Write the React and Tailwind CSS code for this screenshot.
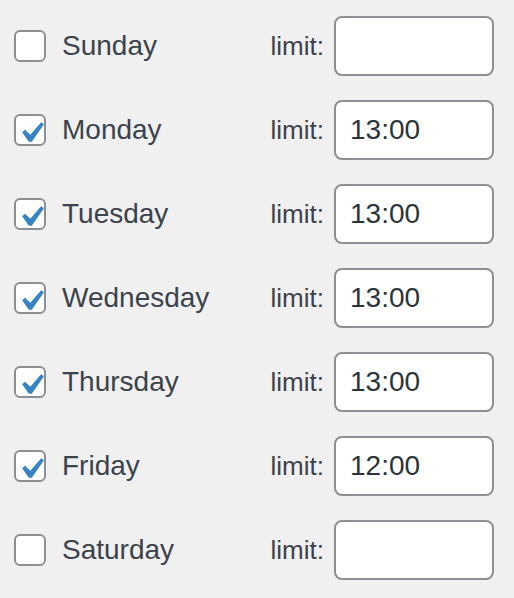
const days = [
  { name: 'Sunday', checked: false, limit: '' },
  { name: 'Monday', checked: true, limit: '13:00' },
  { name: 'Tuesday', checked: true, limit: '13:00' },
  { name: 'Wednesday', checked: true, limit: '13:00' },
  { name: 'Thursday', checked: true, limit: '13:00' },
  { name: 'Friday', checked: true, limit: '12:00' },
  { name: 'Saturday', checked: false, limit: '' },
]

function Checkbox({ checked }) {
  return (
    <span className="relative block w-8 h-8 shrink-0 rounded-[6px] border-2 border-[#8c8f94] bg-white">
      {checked && (
        <svg className="absolute left-[-6px] top-[-4px] w-[42px] h-[42px]" viewBox="0 0 20 20">
          <path d="M14.83 4.89l1.34.94-5.81 8.38H9.02L5.78 9.67l1.34-1.25 2.57 2.4z" fill="#3582c4" />
        </svg>
      )}
    </span>
  )
}

export default function App() {
  return (
    <div className="w-[514px] min-h-screen bg-[#f0f0f1] pt-4 pl-[14px] pr-5 flex flex-col gap-6 font-['Liberation_Sans',Arial,sans-serif]">
      {days.map(day => (
        <div key={day.name} className="flex items-center h-[60px]">
          <Checkbox checked={day.checked} />
          <span className="ml-4 text-[28px] leading-none text-[#3c434a]">{day.name}</span>
          <span className="ml-auto mr-[10px] text-[26px] leading-none text-[#3c434a]">limit:</span>
          <input
            type="text"
            defaultValue={day.limit}
            className="w-40 h-[60px] rounded-[8px] border-2 border-[#8c8f94] bg-white px-[14px] text-[28px] text-[#2c3338] outline-none font-['Liberation_Sans',Arial,sans-serif]"
          />
        </div>
      ))}
    </div>
  )
}
